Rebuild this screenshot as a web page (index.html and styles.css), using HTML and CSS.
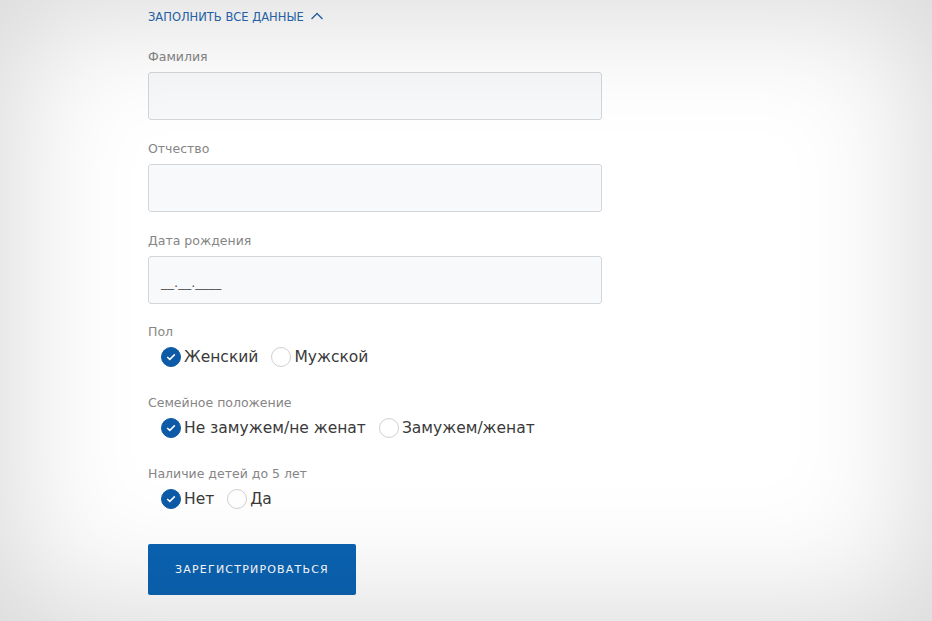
FILE: index.html
```html
<!DOCTYPE html>
<html lang="ru">
<head>
<meta charset="utf-8">
<title>Регистрация</title>
<link rel="stylesheet" href="styles.css">
</head>
<body>
<form class="form">
  <a class="toggle" href="#">ЗАПОЛНИТЬ ВСЕ ДАННЫЕ
    <svg class="chev" width="14" height="10" viewBox="0 0 14 10"><path d="M1.5 8 L7 2.5 L12.5 8" fill="none" stroke="#2767b0" stroke-width="1.4"/></svg>
  </a>
  <div class="fields">
    <div class="field">
      <div class="label">Фамилия</div>
      <div class="input"></div>
    </div>
    <div class="field">
      <div class="label">Отчество</div>
      <div class="input"></div>
    </div>
    <div class="field">
      <div class="label">Дата рождения</div>
      <div class="input"><span class="ph">__.__.____</span></div>
    </div>
    <div class="field group first">
      <div class="label">Пол</div>
      <div class="radios">
        <span class="radio on"><svg width="10" height="8" viewBox="0 0 10 8"><path d="M1.2 4 L3.8 6.4 L8.8 1.4" fill="none" stroke="#fff" stroke-width="1.5"/></svg></span><span class="rtext">Женский</span>
        <span class="radio"></span><span class="rtext">Мужской</span>
      </div>
    </div>
    <div class="field group gap">
      <div class="label">Семейное положение</div>
      <div class="radios">
        <span class="radio on"><svg width="10" height="8" viewBox="0 0 10 8"><path d="M1.2 4 L3.8 6.4 L8.8 1.4" fill="none" stroke="#fff" stroke-width="1.5"/></svg></span><span class="rtext">Не замужем/не женат</span>
        <span class="radio"></span><span class="rtext">Замужем/женат</span>
      </div>
    </div>
    <div class="field group gap">
      <div class="label">Наличие детей до 5 лет</div>
      <div class="radios">
        <span class="radio on"><svg width="10" height="8" viewBox="0 0 10 8"><path d="M1.2 4 L3.8 6.4 L8.8 1.4" fill="none" stroke="#fff" stroke-width="1.5"/></svg></span><span class="rtext">Нет</span>
        <span class="radio"></span><span class="rtext">Да</span>
      </div>
    </div>
  </div>
  <button class="submit" type="button">ЗАРЕГИСТРИРОВАТЬСЯ</button>
</form>
<div class="vignette"></div>
</body>
</html>
```
FILE: styles.css
```css
html, body {
  margin: 0;
  padding: 0;
  background: #fff;
}
body {
  font-family: "DejaVu Sans", "Open Sans", sans-serif;
  padding: 9px 0 0 148px;
  height: 621px;
  box-sizing: border-box;
  overflow: hidden;
}
.form {
  width: 454px;
  display: flex;
  flex-direction: column;
}
.toggle {
  display: flex;
  align-items: center;
  gap: 6px;
  height: 16px;
  font-size: 11.5px;
  color: #2767b0;
  text-decoration: none;
}
.chev { margin-top: -2px; }
.fields {
  margin-top: 24px;
  display: flex;
  flex-direction: column;
  gap: 21px;
}
.field { display: flex; flex-direction: column; }
.field.first { margin-top: -1px; }
.field.gap { margin-top: 5px; }
.label {
  font-size: 12.5px;
  line-height: 16px;
  color: #858585;
  margin-bottom: 7px;
}
.group .label { margin-bottom: 5px; }
.input {
  height: 48px;
  box-sizing: border-box;
  background: #f8f9fb;
  border: 1px solid #d3d6da;
  border-radius: 3px;
  display: flex;
  align-items: center;
  padding-left: 12px;
}
.ph {
  font-size: 13px;
  color: #555;
  margin-top: 4px;
}
.radios {
  display: flex;
  align-items: center;
  height: 24px;
  padding-left: 13px;
}
.radio {
  width: 20px;
  height: 20px;
  box-sizing: border-box;
  border-radius: 50%;
  border: 1px solid #d0d0d0;
  background: #fff;
  display: flex;
  align-items: center;
  justify-content: center;
  flex: none;
}
.radio.on {
  background: #0d5aa7;
  border-color: #0d5aa7;
}
.rtext {
  font-size: 15.5px;
  color: #3a3a3a;
  margin-left: 3px;
  margin-right: 13px;
}
.submit {
  margin-top: 33px;
  width: 208px;
  height: 51px;
  border: none;
  border-radius: 2px;
  background: #0b63b2;
  color: #fff;
  font-family: inherit;
  font-size: 11px;
  font-weight: 500;
  letter-spacing: 1.2px;
  padding: 0;
}
.vignette {
  position: fixed;
  inset: 0;
  pointer-events: none;
  box-shadow: inset 0 0 130px 10px rgba(0,0,0,0.16);
}
```
